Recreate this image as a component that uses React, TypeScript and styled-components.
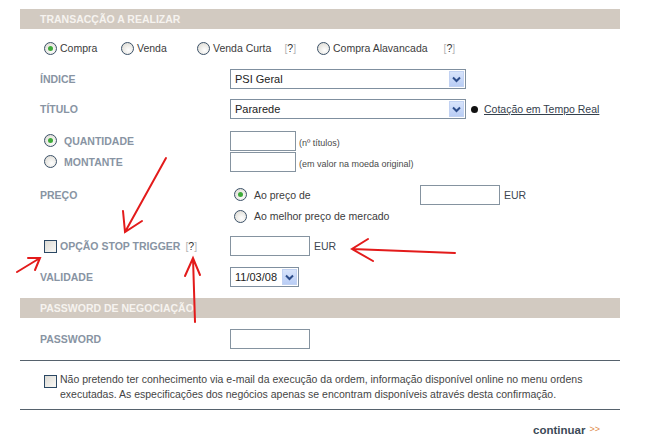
import styled, { createGlobalStyle } from "styled-components";

const Global = createGlobalStyle`
  body {
    margin: 0;
    background: #fff;
    font-family: "Liberation Sans", Tahoma, Arial, sans-serif;
    font-size: 10.5px;
    color: #3c3c3c;
  }
`;

const Page = styled.div`
  position: relative;
  width: 648px;
  height: 446px;
  padding-top: 9px;
  box-sizing: border-box;
`;

const Form = styled.div`
  width: 600px;
  margin-left: 20px;
`;

const SectionBar = styled.div`
  height: 20px;
  background: #d2cac1;
  color: #f6f3ef;
  font-weight: bold;
  font-size: 10.5px;
  line-height: 20px;
  padding-left: 20px;
`;

const Row = styled.div<{ $h: number; $mt?: number }>`
  display: flex;
  align-items: center;
  height: ${(p) => p.$h}px;
  margin-top: ${(p) => p.$mt || 0}px;
`;

const TypeRow = styled.div`
  display: flex;
  align-items: center;
  height: 35px;
  padding: 3px 0 0 24px;
  box-sizing: border-box;
`;

const Label = styled.div`
  width: 190px;
  padding-left: 20px;
  flex-shrink: 0;
  font-weight: bold;
  color: #8894a3;
  display: flex;
  align-items: center;
`;

const RadioLabel = styled(Label)`
  padding-left: 24px;
  width: 186px;
`;

const Option = styled.label<{ $w?: number; $gap?: number }>`
  display: flex;
  align-items: center;
  gap: ${(p) => p.$gap ?? 3}px;
  width: ${(p) => (p.$w ? `${p.$w}px` : "auto")};
  flex-shrink: 0;
`;

const Radio = styled.span<{ $on?: boolean }>`
  width: 11px;
  height: 11px;
  border-radius: 50%;
  border: 1px solid #3b5168;
  background: radial-gradient(circle at 60% 65%, #ffffff 0%, #e4e2dc 70%, #d4d2cc 100%);
  position: relative;
  flex-shrink: 0;
  &::after {
    content: "";
    display: ${(p) => (p.$on ? "block" : "none")};
    position: absolute;
    left: 3px;
    top: 3px;
    width: 5px;
    height: 5px;
    border-radius: 50%;
    background: #3faa3a;
  }
`;

const Check = styled.span`
  width: 11px;
  height: 11px;
  border: 1px solid #2b4864;
  background: linear-gradient(135deg, #dcdad4 0%, #f4f3ef 80%);
  flex-shrink: 0;
`;

const Help = styled.span<{ $ml?: number }>`
  margin-left: ${(p) => p.$ml ?? 10}px;
  color: #333;
  font-weight: normal;
  b {
    color: #b5b5b5;
    font-weight: normal;
  }
`;

const Select = styled.div<{ $w: number }>`
  width: ${(p) => p.$w}px;
  height: 20px;
  box-sizing: border-box;
  border: 1px solid #7f8f9f;
  display: flex;
  align-items: center;
  justify-content: space-between;
  padding: 1px 1px 1px 4px;
  color: #222;
  font-size: 11px;
  background: #fff;
`;

const DropBtn = styled.span`
  width: 15px;
  height: 16px;
  background: linear-gradient(180deg, #d8e4fb 0%, #b9cdf5 100%);
  border: 1px solid #c2d2f2;
  box-sizing: border-box;
  display: flex;
  align-items: center;
  justify-content: center;
`;

const Input = styled.span<{ $w: number }>`
  display: block;
  width: ${(p) => p.$w}px;
  height: 20px;
  box-sizing: border-box;
  border: 1px solid #8593a0;
  background: #fff;
  flex-shrink: 0;
`;

const Note = styled.span`
  font-size: 9px;
  color: #4a4a4a;
  margin: 4px 0 0 3px;
`;

const Unit = styled.span`
  margin-left: 4px;
  color: #3d4650;
`;

const Dot = styled.span`
  width: 7px;
  height: 7px;
  border-radius: 50%;
  background: #111;
  margin: 0 6px 0 5px;
`;

const Link = styled.a`
  color: #34404c;
  text-decoration: underline;
`;

const PriceBlock = styled.div`
  display: flex;
  margin-top: 12px;
`;

const PriceLabel = styled(Label)`
  height: 21px;
  align-self: flex-start;
`;

const PriceOptions = styled.div`
  display: flex;
  flex-direction: column;
  padding-left: 4px;
`;

const PriceLine = styled.div`
  display: flex;
  align-items: center;
  height: 21px;
  &:last-child {
    height: 22px;
  }
`;

const Rule = styled.div<{ $mt: number }>`
  height: 1px;
  background: #56626d;
  margin-top: ${(p) => p.$mt}px;
`;

const Disclaimer = styled.div`
  display: flex;
  align-items: flex-start;
  gap: 3px;
  margin-top: 11px;
  padding-left: 24px;
  line-height: 15px;
  color: #454545;
  ${Check} {
    margin-top: 3px;
  }
`;

const Footer = styled.div`
  display: flex;
  justify-content: flex-end;
  padding-right: 20px;
  margin-top: 14px;
  font-size: 11.5px;
  font-weight: bold;
  color: #3c4a57;
  span {
    color: #e08a4a;
    font-size: 9px;
    margin-left: 4px;
    font-weight: normal;
  }
`;

const Marks = styled.svg`
  position: absolute;
  left: 0;
  top: 0;
  pointer-events: none;
`;

const Chevron = () => (
  <svg width="9" height="7" viewBox="0 0 9 7">
    <path d="M1 1.5 L4.5 5 L8 1.5" fill="none" stroke="#2d4d8a" strokeWidth="2" />
  </svg>
);

export default function App() {
  return (
    <Page>
      <Global />
      <Form>
        <SectionBar>TRANSACÇÃO A REALIZAR</SectionBar>
        <TypeRow>
          <Option $w={77}><Radio $on />Compra</Option>
          <Option $w={76}><Radio />Venda</Option>
          <Option $w={120}>
            <Radio />Venda Curta<Help><b>[</b>?<b>]</b></Help>
          </Option>
          <Option>
            <Radio />Compra Alavancada<Help $ml={13}><b>[</b>?<b>]</b></Help>
          </Option>
        </TypeRow>
        <Row $h={30}>
          <Label>ÍNDICE</Label>
          <Select $w={236}>PSI Geral<DropBtn><Chevron /></DropBtn></Select>
        </Row>
        <Row $h={30}>
          <Label>TÍTULO</Label>
          <Select $w={236}>Pararede<DropBtn><Chevron /></DropBtn></Select>
          <Dot />
          <Link>Cotação em Tempo Real</Link>
        </Row>
        <Row $h={21} $mt={6}>
          <RadioLabel><Option $gap={7}><Radio $on />QUANTIDADE</Option></RadioLabel>
          <Input $w={66} />
          <Note>(nº títulos)</Note>
        </Row>
        <Row $h={21}>
          <RadioLabel><Option $gap={7}><Radio />MONTANTE</Option></RadioLabel>
          <Input $w={66} />
          <Note>(em valor na moeda original)</Note>
        </Row>
        <PriceBlock>
          <PriceLabel>PREÇO</PriceLabel>
          <PriceOptions>
            <PriceLine>
              <Option $w={186} $gap={7}><Radio $on />Ao preço de</Option>
              <Input $w={80} />
              <Unit>EUR</Unit>
            </PriceLine>
            <PriceLine>
              <Option $gap={7}><Radio />Ao melhor preço de mercado</Option>
            </PriceLine>
          </PriceOptions>
        </PriceBlock>
        <Row $h={20} $mt={9}>
          <RadioLabel>
            <Option $gap={3}><Check />OPÇÃO STOP TRIGGER</Option>
            <Help $ml={5}><b>[</b>?<b>]</b></Help>
          </RadioLabel>
          <Input $w={80} />
          <Unit>EUR</Unit>
        </Row>
        <Row $h={20} $mt={11}>
          <Label>VALIDADE</Label>
          <Select $w={69}>11/03/08<DropBtn><Chevron /></DropBtn></Select>
        </Row>
        <Row $h={0} $mt={11} />
        <SectionBar>PASSWORD DE NEGOCIAÇÃO</SectionBar>
        <Row $h={20} $mt={11}>
          <Label>PASSWORD</Label>
          <Input $w={80} />
        </Row>
        <Rule $mt={11} />
        <Disclaimer>
          <Check />
          <div>
            Não pretendo ter conhecimento via e-mail da execução da ordem, informação disponível online no menu ordens
            <br />
            executadas. As especificações dos negócios apenas se encontram disponíveis através desta confirmação.
          </div>
        </Disclaimer>
        <Rule $mt={7} />
        <Footer>continuar<span>&gt;&gt;</span></Footer>
      </Form>
      <Marks width="648" height="446" viewBox="0 0 648 446">
        <g fill="none" stroke="#e31b1b" strokeWidth="2" strokeLinecap="round">
          <path d="M166 158 L125 232 M123 211 L125 232 L142 221" />
          <path d="M17 272 L40 258 M28 258 L40 258 L35 270" />
          <path d="M195 322 L193 258 M185 276 L193 258 L200 275" />
          <path d="M455 253 L352 249 M368 239 L352 249 L373 261" />
        </g>
      </Marks>
    </Page>
  );
}
